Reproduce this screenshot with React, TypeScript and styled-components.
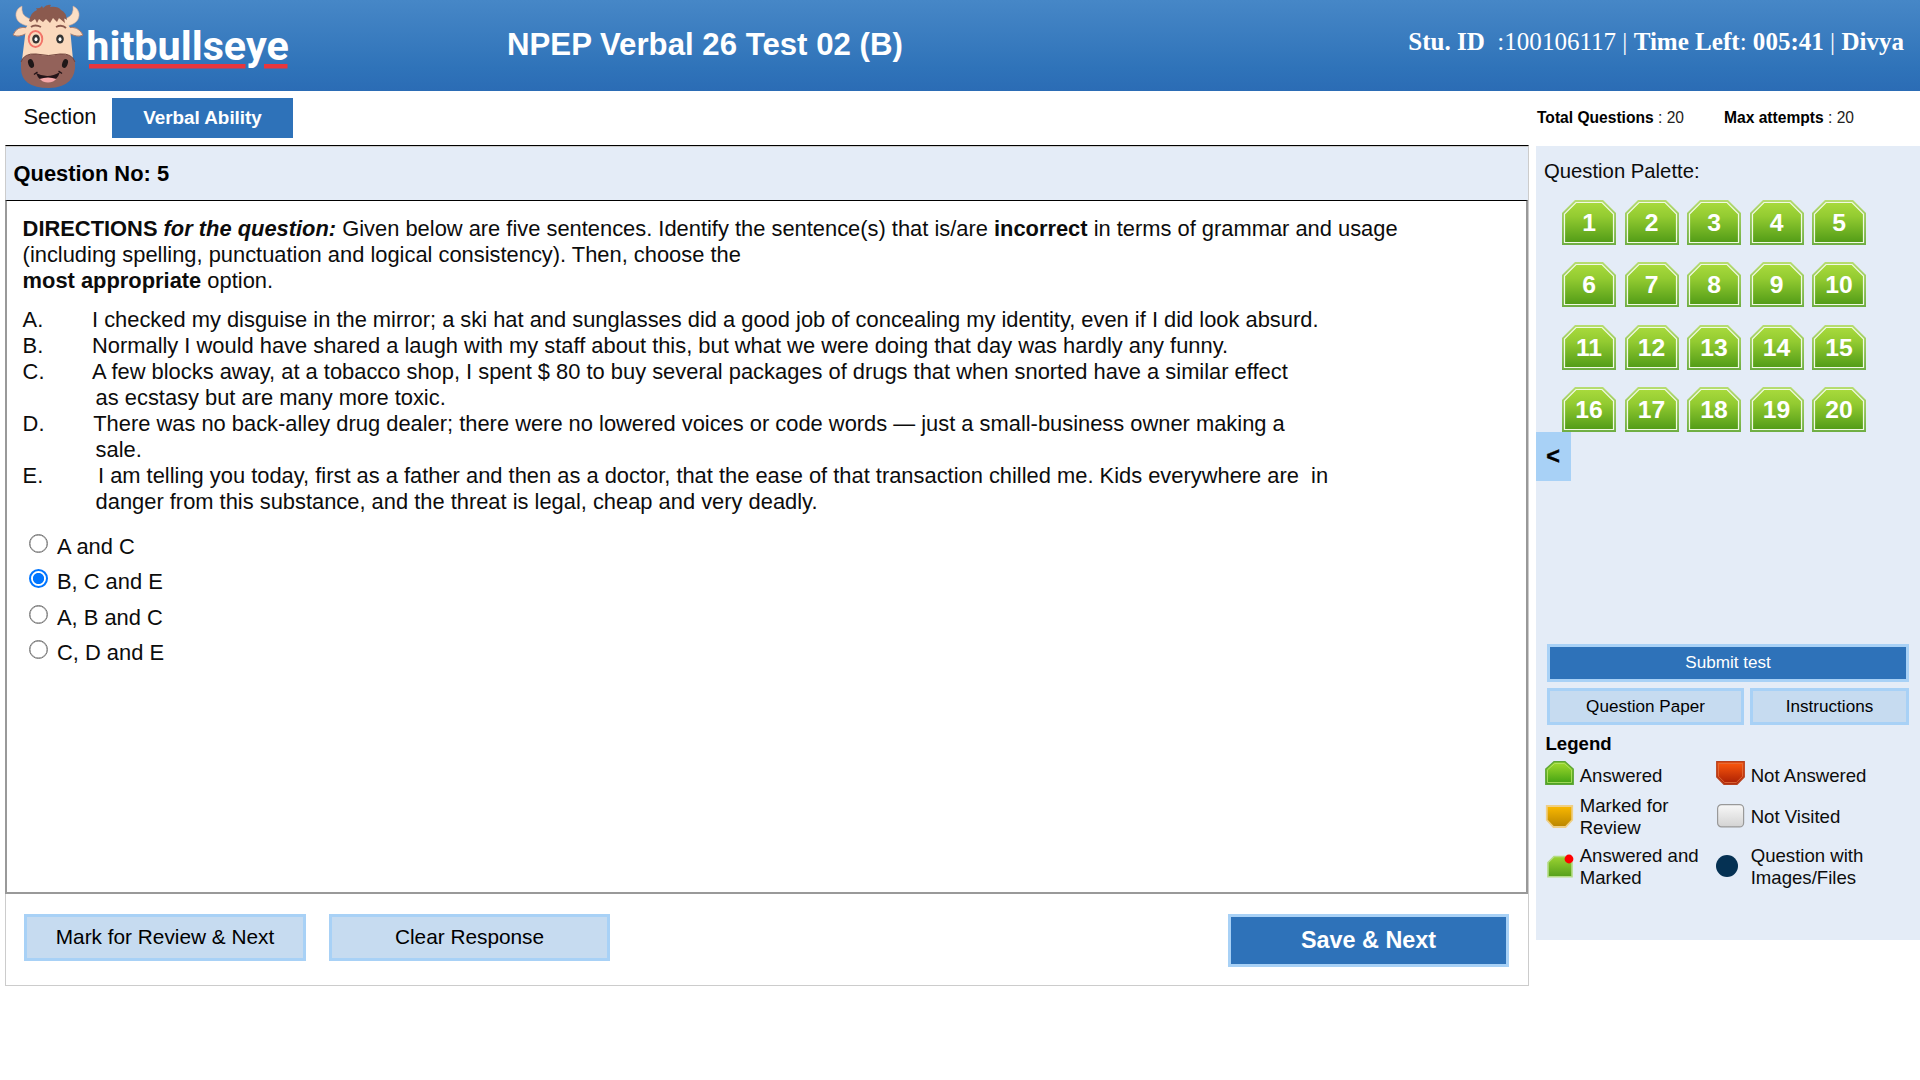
import React, { useState } from "react";
import styled, { createGlobalStyle, css } from "styled-components";

const Global = createGlobalStyle`
  * { box-sizing: border-box; }
  body { margin: 0; background: #fff; color: #0c0c0c; font-family: "Liberation Sans", Arial, sans-serif; font-size: 21.88px; line-height: 26px; }
`;

const Header = styled.header`
  height: 91px;
  display: grid;
  grid-template-columns: 507px 1fr auto;
  padding-right: 16px;
  background: linear-gradient(#4687c7, #4283c4 15%, #2f73b9 75%, #2b6cb5);
  color: #fff;
`;
const Title = styled.h1`
  margin: 0;
  padding-top: 27px;
  font-size: 31.2px;
  line-height: 36px;
  white-space: nowrap;
`;
const Student = styled.div`
  padding-top: 27px;
  font: 25.05px/29px "Liberation Serif", "Times New Roman", serif;
  white-space: pre;
`;
const SectionBar = styled.nav`
  height: 54px;
  display: flex;
  align-items: flex-start;
  padding: 7px 0 0 23.5px;
`;
const SectionLabel = styled.span`
  width: 88.5px;
  padding-top: 6px;
`;
const SectionTab = styled.button`
  width: 181px;
  height: 40px;
  padding: 0 0 1px;
  border: 0;
  background: #2e72b9;
  color: #fff;
  font: bold 18.85px "Liberation Sans", Arial, sans-serif;
`;
const Totals = styled.div`
  display: flex;
  gap: 40px;
  margin-left: auto;
  width: 383px;
  padding-top: 9px;
  font-size: 15.6px;
  line-height: 22px;
  color: #222;
  b { color: #000; }
`;
const Main = styled.main`
  display: flex;
  align-items: flex-start;
  gap: 7px;
  padding-left: 5px;
`;
const QuestionPanel = styled.section`
  width: 1524px;
  height: 841px;
  display: flex;
  flex-direction: column;
  border: 1px solid #ccc;
  border-top: 1px solid #000;
`;
const QuestionHeader = styled.div`
  height: 54px;
  flex: none;
  padding: 14px 0 0 7.5px;
  background: #e4ecf7;
  border-top: 1px solid #ccc;
  font-weight: bold;
  color: #000;
`;
const QuestionBody = styled.article`
  height: 694px;
  flex: none;
  margin: 0 0 0 -1px;
  padding: 15px 15px 0 15.6px;
  border: 2px solid #999;
  border-top: 1px solid #000;
`;
const Directions = styled.p`
  margin: 0 0 13px;
`;
const Sentence = styled.div`
  white-space: pre;
  display: grid;
  grid-template-columns: 73px 1fr;
`;
const Line = styled.span<{ $shift: number }>`
  display: block;
  margin-left: ${(p) => p.$shift}px;
`;
const Options = styled.div`
  margin-top: 13px;
  padding-left: 4.4px;
`;
const Option = styled.label`
  height: 35.4px;
  display: flex;
  align-items: flex-start;
  gap: 9px;
  padding-top: 6px;
`;
const Radio = styled.input`
  appearance: none;
  flex: none;
  width: 19px;
  height: 19px;
  margin: 0;
  margin-left: 2px;
  border: 1px solid #767676;
  border-radius: 50%;
  background: #fff;
  box-shadow: inset 0 0 0 0.4px #767676;
  &:checked {
    border: 2px solid #0075ff;
    box-shadow: none;
    background: radial-gradient(circle, #0075ff 5.2px, #fff 6px);
  }
`;
const Actions = styled.footer`
  display: flex;
  align-items: flex-start;
  gap: 23px;
  padding: 20px 19px 0 18px;
`;
const Button = styled.button<{ $w: number; $h: number; $size: number; $lift?: number; $primary?: boolean; $bold?: boolean; $end?: boolean }>`
  width: ${(p) => p.$w}px;
  height: ${(p) => p.$h}px;
  padding: 0 0 ${(p) => p.$lift ?? 0}px;
  border: 3px solid #a8d1f6;
  background: #c6dbf0;
  color: #000;
  font: ${(p) => (p.$bold ? "bold" : "normal")} ${(p) => p.$size}px "Liberation Sans", Arial, sans-serif;
  ${(p) => p.$primary && css`background: #2e72b9; color: #fff;`}
  ${(p) => p.$end && css`margin-left: auto;`}
`;
const Sidebar = styled.aside`
  position: relative;
  width: 384px;
  height: 794px;
  margin-top: 1px;
  background: #e4ecf7;
`;
const PaletteTitle = styled.h2`
  margin: 0;
  padding: 13px 0 0 8px;
  height: 54px;
  font-size: 20.3px;
  line-height: 24px;
  font-weight: normal;
`;
const Palette = styled.div`
  display: grid;
  grid-template-columns: repeat(5, 62.5px);
  grid-auto-rows: 62.4px;
  padding-left: 26px;
  height: 444px;
  align-content: start;
`;
const TileButton = styled.button`
  display: grid;
  width: 54px;
  height: 45px;
  padding: 0;
  border: 0;
  background: none;
  color: #fff;
  font: bold 24.7px/46px "Liberation Sans", Arial, sans-serif;
  > * { grid-area: 1 / 1; }
  > span { z-index: 1; height: 45px; }
`;
const Toggle = styled.button`
  position: absolute;
  left: 0;
  top: 286px;
  width: 35px;
  height: 49px;
  padding: 0 1px 0 0;
  border: 0;
  background: #a8d1f6;
  color: #000;
  font: bold 23.4px "Liberation Sans", Arial, sans-serif;
  -webkit-text-stroke: 0.4px #000;
`;
const SideButtons = styled.div`
  display: flex;
  flex-wrap: wrap;
  gap: 6px;
  padding-left: 11px;
`;
const LegendTitle = styled.h3`
  margin: 8px 0 0 9.5px;
  font-size: 18.6px;
  line-height: 22px;
  color: #000;
`;
const Legend = styled.div`
  display: grid;
  grid-template-columns: 171px 190px;
  grid-template-rows: 33px 50px 50px;
  align-items: center;
  padding: 4px 0 0 9px;
  font-size: 18.6px;
  line-height: 22px;
`;
const LegendItem = styled.div<{ $lift: number }>`
  display: grid;
  grid-template-columns: 34.7px 1fr;
  align-items: center;
  white-space: pre;
  svg { display: block; margin-bottom: ${(p) => p.$lift}px; }
`;

function Logo() {
  return (
    <svg width="300" height="91" viewBox="0 0 300 91">
      <path d="M29 26C20 25 15 20 16 13Q17 8 22 6Q21 15 28 18L36 21V29ZM66 26C75 25 80 20 79 13Q78 8 73 6Q74 15 67 18L58 21V29Z" fill="#fbdfc6" stroke="#c9a597" strokeWidth=".6" />
      <path d="M28 28Q17 25 13 35Q19 38 27 33ZM67 28Q78 25 83 35Q77 38 69 33Z" fill="#fbd9bd" stroke="#a77b6e" strokeWidth="1" />
      <path d="M26 28Q30 17 48 16Q66 17 70 28L73 60H22Z" fill="#fbd9bd" />
      <path d="M29 21Q31 12 37 10L36 8Q40 9 42 6L43 8Q47 4 51 5L50 7Q58 6 61 10Q66 12 67 20L64 18L65 23L59 18L57 22L53 18L50 23L46 19L43 22L39 19L37 23L35 19L31 22Z" fill="#8b5a4e" />
      <path d="M21 62Q24 53 36 54Q49 57 60 54Q72 53 75 62Q77 87 49 88Q21 88 21 68Z" fill="#93625a" />
      <path d="M21 62Q24 53 36 54Q49 57 60 54Q72 53 75 62" fill="none" stroke="#74463f" />
      <path d="M31 27Q35 24 41 27M56 27Q62 24 66 28" fill="none" stroke="#8b5a4e" strokeWidth="1.8" />
      <ellipse cx="35.5" cy="39" rx="6.8" ry="8" fill="none" stroke="#f27368" strokeWidth="1.9" />
      <ellipse cx="36" cy="39" rx="3.8" ry="4.6" fill="#333" />
      <ellipse cx="60" cy="39" rx="3.8" ry="4.6" fill="#333" />
      <ellipse cx="36" cy="39.3" rx="1.5" ry="2" fill="#fff" />
      <ellipse cx="60" cy="39.3" rx="1.5" ry="2" fill="#fff" />
      <ellipse cx="31" cy="63.500" rx="2.7" ry="4.5" fill="#1e1718" transform="rotate(-20 31 63.500)" />
      <ellipse cx="65" cy="63.500" rx="2.7" ry="4.5" fill="#1e1718" transform="rotate(20 65 63.500)" />
      <path d="M36 73Q48 79.500 60 72Q57 82 48 82Q39 82 36 73Z" fill="#241519" />
      <path d="M39.500 79Q48 76 56.500 79Q53 82.500 48 82.500Q43 82.500 39.500 79Z" fill="#f6a7a8" />
      <path d="M34 74.500L37.500 72M58.500 71L62 73.500" stroke="#241519" strokeWidth="1.5" />
      <path d="M89 64H245.500V68.500H89ZM264 64H287.500V68.500H264Z" fill="#e8363d" />
      <text x="86.300" y="60" textLength="202.500" lengthAdjust="spacingAndGlyphs" fontFamily="Roboto, sans-serif" fontWeight="700" fontSize="41.500" fill="#fff">hitbullseye</text>
    </svg>
  );
}

function Tile({ n }: { n: number }) {
  return (
    <TileButton>
      <svg width="54" height="45" viewBox="0 0 54 45">
        <defs>
          <linearGradient id={"tile" + n} x1="0" y1="0" x2="0" y2="1">
            <stop offset="0" stopColor="#a8da3c" />
            <stop offset=".35" stopColor="#93cb31" />
            <stop offset="1" stopColor="#529c17" />
          </linearGradient>
          <linearGradient id={"edge" + n} x1="0" y1="0" x2="0" y2="1">
            <stop offset="0" stopColor="#b7dd70" />
            <stop offset="1" stopColor="#6fae43" />
          </linearGradient>
        </defs>
        <path d="M0 45V13L13 0H41L54 13V45Z" fill={"url(#edge" + n + ")"} />
        <path d="M2.500 42.500V14L14 2.500H40L51.500 14V42.500Z" fill={"url(#tile" + n + ")"} stroke="#f1f9e4" strokeWidth="1.200" />
      </svg>
      <span>{n}</span>
    </TileButton>
  );
}

function LegendIcon({ kind }: { kind: string }) {
  if (kind === "answered")
    return (
      <svg width="29" height="24" viewBox="0 0 29 24">
        <linearGradient id="la" x1="0" y1="0" x2="0" y2="1"><stop stopColor="#a3dc2d" /><stop offset="1" stopColor="#3fa012" /></linearGradient>
        <path d="M.8 23.200V8L9 .8H20L28.200 8V23.200Z" fill="url(#la)" stroke="#5da537" strokeWidth="1.400" />
        <path d="M2.500 21.500V8.800L9.700 2.500H19.300L26.500 8.800V21.500Z" fill="none" stroke="#b5e36b" strokeWidth=".8" />
      </svg>
    );
  if (kind === "not-answered")
    return (
      <svg width="29" height="24" viewBox="0 0 29 24">
        <linearGradient id="ln" x1="0" y1="0" x2="0" y2="1"><stop stopColor="#ff5a0c" /><stop offset="1" stopColor="#a81e04" /></linearGradient>
        <path d="M.8 .8H28.200V16L21 23.200H8L.8 16Z" fill="url(#ln)" stroke="#b8401c" strokeWidth="1.400" />
        <path d="M2.500 2.500H26.500V15.400L20.300 21.500H8.700L2.500 15.400Z" fill="none" stroke="#e2703f" strokeWidth=".8" />
      </svg>
    );
  if (kind === "review")
    return (
      <svg width="29" height="24" viewBox="0 0 29 24">
        <linearGradient id="lr" x1="0" y1="0" x2="0" y2="1"><stop stopColor="#fbb900" /><stop offset="1" stopColor="#b98500" /></linearGradient>
        <path d="M1.800 2H27.200V16L20.500 23H8.500L1.800 16Z" fill="url(#lr)" stroke="#efcf85" strokeWidth="1.800" />
      </svg>
    );
  if (kind === "not-visited")
    return (
      <svg width="29" height="24" viewBox="0 0 29 24">
        <linearGradient id="lv" x1="0" y1="0" x2="0" y2="1"><stop stopColor="#f8f8f8" /><stop offset="1" stopColor="#d3d3d3" /></linearGradient>
        <rect x="1.600" y=".6" width="26" height="22.300" rx="4" fill="url(#lv)" stroke="#999" strokeWidth="1.200" />
      </svg>
    );
  if (kind === "answered-marked")
    return (
      <svg width="29" height="24" viewBox="0 0 29 24">
        <linearGradient id="lm" x1="0" y1="0" x2="0" y2="1"><stop stopColor="#9bd332" /><stop offset="1" stopColor="#55a01a" /></linearGradient>
        <path d="M3 22.800V8.500L9 2.500H21L27 8.500V22.800Z" fill="url(#lm)" stroke="#b5dc85" strokeWidth="1.600" />
        <circle cx="24" cy="5" r="4.400" fill="#f00" />
      </svg>
    );
  return <svg width="29" height="24" viewBox="0 0 29 24"><circle cx="11" cy="12" r="11" fill="#053153" /></svg>;
}

const sentences = [
  { key: "A.", first: -3.6, lines: ["I checked my disguise in the mirror; a ski hat and sunglasses did a good job of concealing my identity, even if I did look absurd."] },
  { key: "B.", first: -3.6, lines: ["Normally I would have shared a laugh with my staff about this, but what we were doing that day was hardly any funny."] },
  { key: "C.", first: -3.6, lines: ["A few blocks away, at a tobacco shop, I spent $ 80 to buy several packages of drugs that when snorted have a similar effect", "as ecstasy but are many more toxic."] },
  { key: "D.", first: -2.4, lines: ["There was no back-alley drug dealer; there were no lowered voices or code words — just a small-business owner making a", "sale."] },
  { key: "E.", first: 2.4, lines: ["I am telling you today, first as a father and then as a doctor, that the ease of that transaction chilled me. Kids everywhere are  in", "danger from this substance, and the threat is legal, cheap and very deadly."] },
];
const options = ["A and C", "B, C and E", "A, B and C", "C, D and E"];
const legend: { kind: string; text: string; lift: number }[] = [
  { kind: "answered", text: "Answered", lift: 5 },
  { kind: "not-answered", text: "Not Answered", lift: 5 },
  { kind: "review", text: "Marked for\nReview", lift: 2 },
  { kind: "not-visited", text: "Not Visited", lift: 2 },
  { kind: "answered-marked", text: "Answered and\nMarked", lift: 2 },
  { kind: "files", text: "Question with\nImages/Files", lift: 2 },
];

export default function App() {
  const [choice, setChoice] = useState(1);
  return (
    <>
      <Global />
      <Header>
        <Logo />
        <Title>NPEP Verbal 26 Test 02 (B)</Title>
        <Student><b>Stu. ID</b>{"  :100106117 | "}<b>Time Left</b>: <b>005:41</b> | <b>Divya</b></Student>
      </Header>
      <SectionBar>
        <SectionLabel>Section</SectionLabel>
        <SectionTab>Verbal Ability</SectionTab>
        <Totals>
          <span><b>Total Questions</b> : 20</span>
          <span><b>Max attempts</b> : 20</span>
        </Totals>
      </SectionBar>
      <Main>
        <QuestionPanel>
          <QuestionHeader>Question No: 5</QuestionHeader>
          <QuestionBody>
            <Directions>
              <b>DIRECTIONS <i>for the question:</i></b> Given below are five sentences. Identify the sentence(s) that is/are <b>incorrect</b> in terms of grammar and usage<br />
              (including spelling, punctuation and logical consistency). Then, choose the<br />
              <b>most appropriate</b> option.
            </Directions>
            {sentences.map((s) => (
              <Sentence key={s.key}>
                <span>{s.key}</span>
                <span>
                  {s.lines.map((l, i) => <Line key={i} $shift={i ? 0 : s.first}>{l}</Line>)}
                </span>
              </Sentence>
            ))}
            <Options>
              {options.map((o, i) => (
                <Option key={o}>
                  <Radio type="radio" name="answer" checked={choice === i} onChange={() => setChoice(i)} />
                  {o}
                </Option>
              ))}
            </Options>
          </QuestionBody>
          <Actions>
            <Button $w={282} $h={47} $size={20.8} $lift={2}>Mark for Review &amp; Next</Button>
            <Button $w={281} $h={47} $size={20.8} $lift={2}>Clear Response</Button>
            <Button $w={281} $h={53} $size={23.4} $primary $bold $end>Save &amp; Next</Button>
          </Actions>
        </QuestionPanel>
        <Sidebar>
          <PaletteTitle>Question Palette:</PaletteTitle>
          <Palette>{Array.from({ length: 20 }, (_, i) => <Tile key={i} n={i + 1} />)}</Palette>
          <Toggle>&lt;</Toggle>
          <SideButtons>
            <Button $w={362} $h={38} $size={17.1} $primary>Submit test</Button>
            <Button $w={197} $h={37} $size={17.1}>Question Paper</Button>
            <Button $w={159} $h={37} $size={17.1}>Instructions</Button>
          </SideButtons>
          <LegendTitle>Legend</LegendTitle>
          <Legend>
            {legend.map(({ kind, text, lift }) => (
              <LegendItem key={kind} $lift={lift}><LegendIcon kind={kind} /><span>{text}</span></LegendItem>
            ))}
          </Legend>
        </Sidebar>
      </Main>
    </>
  );
}
